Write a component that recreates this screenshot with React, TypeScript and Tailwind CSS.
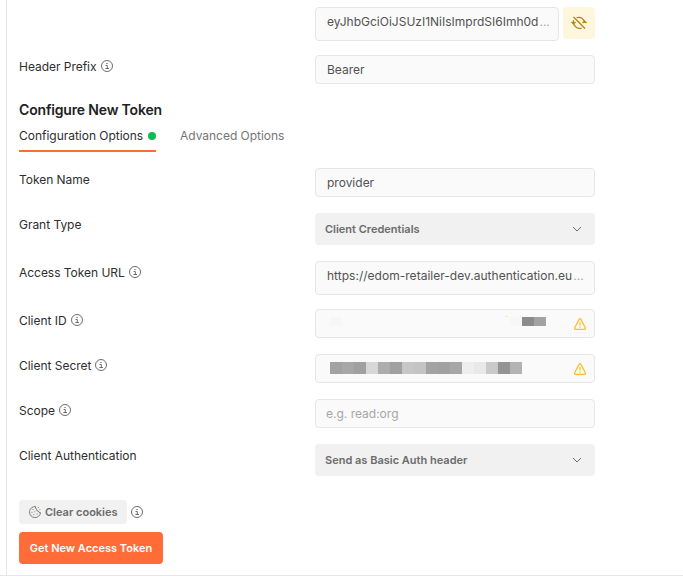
import React from "react";

function InfoIcon({ className = "" }: { className?: string }) {
  return (
    <svg width="12" height="12" viewBox="0 0 12 12" fill="none" stroke="#5c5c5c" className={`shrink-0 ${className}`}>
      <circle cx="6" cy="6" r="5.5" strokeWidth="0.9" />
      <path d="M4.6 5.5H6.3V8.5M4.4 8.5H8" strokeWidth="0.9" />
      <path d="M5.4 3.5H6.6" strokeWidth="1" />
    </svg>
  );
}

function ChevronIcon() {
  return (
    <svg width="10" height="6" viewBox="0 0 10 6" fill="none" stroke="#6b6b6b" className="mr-[13px]">
      <path d="M1 1L5 5L9 1" strokeWidth="1" />
    </svg>
  );
}

function WarningIcon() {
  return (
    <svg width="12" height="12" viewBox="0 0 12 12" fill="none" stroke="#fbbf2d" className="mr-[8px] shrink-0">
      <path d="M5.2 1.2Q6 0.1 6.8 1.2L11.3 9.8Q11.8 11.2 10.6 11.3H1.4Q0.2 11.2 0.7 9.8Z" strokeWidth="1.3" />
      <path d="M6 4V7.6M6 8.5V9.8" strokeWidth="1.3" />
    </svg>
  );
}

function SyncOffIcon() {
  return (
    <svg width="16" height="14" viewBox="0 0 16 14" fill="none" stroke="#b37f14" strokeWidth="1.2">
      <path d="M2.5 1L14 12.5" />
      <path d="M5.5 1.8C9.5 0.2 13.4 3 13.5 7M11.5 7L13.5 5L15.5 7" />
      <path d="M2.6 4.2C1.6 8.5 5.3 13.8 10.6 12.1M0.5 6L2.5 8L4.5 6" />
    </svg>
  );
}

function CookieIcon() {
  return (
    <svg width="12" height="12" viewBox="0 0 12 12" fill="none" stroke="#6b6b6b" strokeWidth="0.9">
      <path d="M6.5 0.6A5.5 5.5 0 1 0 11.5 6.6Q9.7 6.9 9.4 5.1Q7.3 5.1 7.4 3.1Q6.1 2.3 6.5 0.6Z" />
      <path d="M3.5 3.5H4.5M2.5 6.3H3.5M5.3 5.8H6.3M4.3 8.7H5.3M7.6 8H8.6M8.8 1.5H9.8M10.5 3.5H11.3" />
    </svg>
  );
}

function Row({ label, info, className = "", children }: { label?: string; info?: boolean; className?: string; children: React.ReactNode }) {
  return (
    <div className={`flex items-start ${className}`}>
      <div className="flex h-6 w-[296px] shrink-0 items-center gap-1 text-[12px] tracking-[-0.03px] text-[#2e2e2e]">
        {label && <span>{label}</span>}
        {info && <InfoIcon className="mb-[2px]" />}
      </div>
      {children}
    </div>
  );
}

const box = "flex w-[280px] rounded-[4px] border border-[#e6e6e6] bg-[#fafafa] text-[12px] text-[#525252]";

function Select({ value }: { value: string }) {
  return (
    <div className="flex h-8 w-[280px] items-center justify-between rounded-[4px] bg-[#f1f1f1] pl-[10px] text-[11px] font-semibold text-[#6b6b6b]">
      <span>{value}</span>
      <ChevronIcon />
    </div>
  );
}

export default function App() {
  return (
    <div className="h-[584px] w-[683px] overflow-hidden bg-white font-['Inter',sans-serif]">
      <main className="ml-[6px] flex h-[575px] flex-col border-l border-[#e6e6e6] pl-3 pt-[7px]">
        <Row>
          <div className="flex gap-1">
            <div className="flex h-[34px] w-[244px] rounded-[4px] border border-[#e6e6e6] bg-[#fafafa] pl-[11px] text-[12px] leading-[28px] text-[#525252]">
              <span>eyJhbGciOiJSUzI1NiIsImprdSI6Imh0d</span>
              <span className="pl-px text-[#a6a6a6]">...</span>
            </div>
            <button className="flex size-8 items-center justify-center rounded-[4px] bg-[#fff7dd]">
              <SyncOffIcon />
            </button>
          </div>
        </Row>
        <Row label="Header Prefix" info className="mt-[14px]">
          <div className={`${box} h-[29px] pl-[11px] leading-[28px]`}>Bearer</div>
        </Row>
        <h2 className="mt-4 h-5 text-[14px] font-semibold leading-5 tracking-[-0.17px] text-[#212121]">Configure New Token</h2>
        <nav className="flex h-8 gap-6 text-[12px] tracking-[-0.02px]">
          <div className="flex w-[137px] items-center justify-between border-b-2 border-[#ff6c37] pt-[2px] text-[#2e2e2e]">
            <span>Configuration Options</span>
            <span className="size-2 rounded-full bg-[#0cbb52]" />
          </div>
          <div className="flex items-center border-b-2 border-transparent pt-[2px] text-[#757575]">Advanced Options</div>
        </nav>
        <Row label="Token Name" className="mt-4">
          <div className={`${box} h-[29px] pl-[11px] leading-[28px]`}>provider</div>
        </Row>
        <Row label="Grant Type" className="mt-4">
          <Select value="Client Credentials" />
        </Row>
        <Row label="Access Token URL" info className="mt-4">
          <div className={`${box} h-[34px] pl-[11px] leading-[28px] tracking-[0.02px]`}>
            <span>https://edom-retailer-dev.authentication.eu</span>
            <span className="pl-px text-[#a6a6a6]">...</span>
          </div>
        </Row>
        <Row label="Client ID" info className="mt-[14px]">
          <div className={`${box} h-[29px] items-center justify-between pl-[14px]`}>
            <div className="-mt-1 flex h-[9px] w-[216px] justify-between">
              <span className="w-3 bg-[#f7f7f7]" />
              <div className="flex">
                <span className="-mt-px mr-[2px] h-px w-[3px] bg-[#ffe9ae]" />
                <span className="w-3 bg-[#f7f7f7]" />
                <span className="w-3 bg-[#8c8c8c]" />
                <span className="w-3 bg-[#a2a2a2]" />
              </div>
            </div>
            <WarningIcon />
          </div>
        </Row>
        <Row label="Client Secret" info className="mt-4">
          <div className={`${box} h-[29px] items-center justify-between pl-[14px]`}>
            <div className="-mt-px flex h-3">
              <span className="w-3 bg-[#a2a2a2]" />
              <span className="w-3 bg-[#a7a7a7]" />
              <span className="w-3 bg-[#a1a1a1]" />
              <span className="w-3 bg-[#d7d7d7]" />
              <span className="w-3 bg-[#adadad]" />
              <span className="w-3 bg-[#a0a0a0]" />
              <span className="w-3 bg-[#c7c7c7]" />
              <span className="w-3 bg-[#c4c4c4]" />
              <span className="w-3 bg-[#a3a3a3]" />
              <span className="w-3 bg-[#a1a1a1]" />
              <span className="w-3 bg-[#a7a7a7]" />
              <span className="w-3 bg-[#eeeeee]" />
              <span className="w-3 bg-[#e9e9e9]" />
              <span className="w-3 bg-[#c9c9c9]" />
              <span className="w-3 bg-[#949494]" />
              <span className="w-3 bg-[#b3b3b3]" />
            </div>
            <WarningIcon />
          </div>
        </Row>
        <Row label="Scope" info className="mt-4">
          <input placeholder="e.g. read:org" className={`${box} h-[29px] pl-[10px] placeholder:text-[#a6a6a6]`} />
        </Row>
        <Row label="Client Authentication" className="mt-4">
          <Select value="Send as Basic Auth header" />
        </Row>
        <div className="mt-6 flex items-center gap-1">
          <button className="flex h-6 w-[108px] items-center gap-1 rounded-[4px] bg-[#f1f1f1] pl-[10px] text-[11px] font-semibold text-[#6b6b6b]">
            <CookieIcon />
            <span>Clear cookies</span>
          </button>
          <InfoIcon />
        </div>
        <button className="mt-2 h-8 w-36 rounded-[4px] bg-[#ff6c37] text-[11px] font-semibold text-white">Get New Access Token</button>
      </main>
      <div className="h-px bg-[#e6e6e6]" />
    </div>
  );
}
